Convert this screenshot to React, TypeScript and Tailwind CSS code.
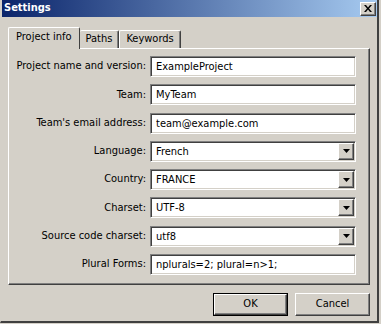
const raised =
  "border border-t-white border-l-white border-b-[#404040] border-r-[#404040] shadow-[inset_-1px_-1px_0_#808080]";
const sunken =
  "border border-t-[#808080] border-l-[#808080] border-b-white border-r-white shadow-[inset_1px_1px_0_#404040,inset_-1px_-1px_0_#d4d0c8]";

const rows: { label: string; value: string; combo?: boolean }[] = [
  { label: "Project name and version:", value: "ExampleProject" },
  { label: "Team:", value: "MyTeam" },
  { label: "Team's email address:", value: "team@example.com" },
  { label: "Language:", value: "French", combo: true },
  { label: "Country:", value: "FRANCE", combo: true },
  { label: "Charset:", value: "UTF-8", combo: true },
  { label: "Source code charset:", value: "utf8", combo: true },
  { label: "Plural Forms:", value: "nplurals=2; plural=n>1;" },
];

function Field({ value, combo }: { value: string; combo?: boolean }) {
  return (
    <div className={`flex h-[21px] items-center bg-white ${sunken}`}>
      <span className="flex-1 pl-[5px] leading-none">{value}</span>
      {combo && (
        <div className={`mr-[1px] flex h-[17px] w-[16px] items-center justify-center bg-[#d4d0c8] ${raised}`}>
          <svg width="7" height="4" viewBox="0 0 7 4">
            <path d="M0 0h7L3.5 4z" fill="#000" />
          </svg>
        </div>
      )}
    </div>
  );
}

export default function App() {
  return (
    <div
      className="h-[324px] w-[381px] bg-[#d4d0c8] text-[11px] text-black"
      style={{ fontFamily: '"DejaVu Sans Condensed", "Liberation Sans", sans-serif' }}
    >
      <div className="flex h-[323px] w-[379px] flex-col border-l border-r-2 border-b-2 border-l-[#d4d0c8] border-r-[#404040] border-b-[#404040] pl-[1px]">
        {/* title bar */}
        <div className="flex h-[17px] w-[375px] items-center justify-between bg-[linear-gradient(to_right,#0a246a,#a6caf0)] pl-[2px] pr-[1px]">
          <span className="font-bold text-white">Settings</span>
          <button className={`flex h-[14px] w-[16px] items-center justify-center bg-[#d4d0c8] ${raised}`}>
            <svg width="8" height="7" viewBox="0 0 8 7">
              <path d="M0 0h2l2 2.5L6 0h2L5 3.5 8 7H6L4 4.5 2 7H0l3-3.5z" fill="#000" />
            </svg>
          </button>
        </div>

        <div className="pl-[6px] pt-[10px]">
          {/* tabs */}
          <div className="flex h-[21px] items-end">
            <div className="relative z-10 -mb-[1px] flex h-[22px] items-center rounded-t-[2px] border-l border-t border-r border-l-white border-t-white border-r-[#404040] bg-[#d4d0c8] px-[7px] pb-[2px]">
              Project info
            </div>
            <div className="flex h-[18px] items-center rounded-t-[2px] border-t border-r border-t-white border-r-[#404040] px-[6px] shadow-[inset_-1px_0_0_#808080]">
              Paths
            </div>
            <div className="flex h-[18px] items-center rounded-t-[2px] border-l border-t border-r border-l-white border-t-white border-r-[#404040] px-[6px] shadow-[inset_-1px_0_0_#808080]">
              Keywords
            </div>
          </div>

          {/* panel */}
          <div className={`h-[237px] w-[362px] bg-[#d4d0c8] pt-[7px] ${raised}`}>
            <div className="grid grid-cols-[137px_206px] items-center gap-x-[4px] gap-y-[7.3px]">
              {rows.map((r) => (
                <div key={r.label} className="contents">
                  <span className="text-right">{r.label}</span>
                  <Field value={r.value} combo={r.combo} />
                </div>
              ))}
            </div>
          </div>

          {/* buttons */}
          <div className="flex w-[362px] justify-end gap-[7px] pt-[8px]">
            <button className="h-[23px] w-[75px] border border-black">
              <div className={`flex h-full w-full items-center justify-center ${raised}`}>OK</div>
            </button>
            <button className={`h-[23px] w-[75px] ${raised}`}>Cancel</button>
          </div>
        </div>
      </div>
    </div>
  );
}
